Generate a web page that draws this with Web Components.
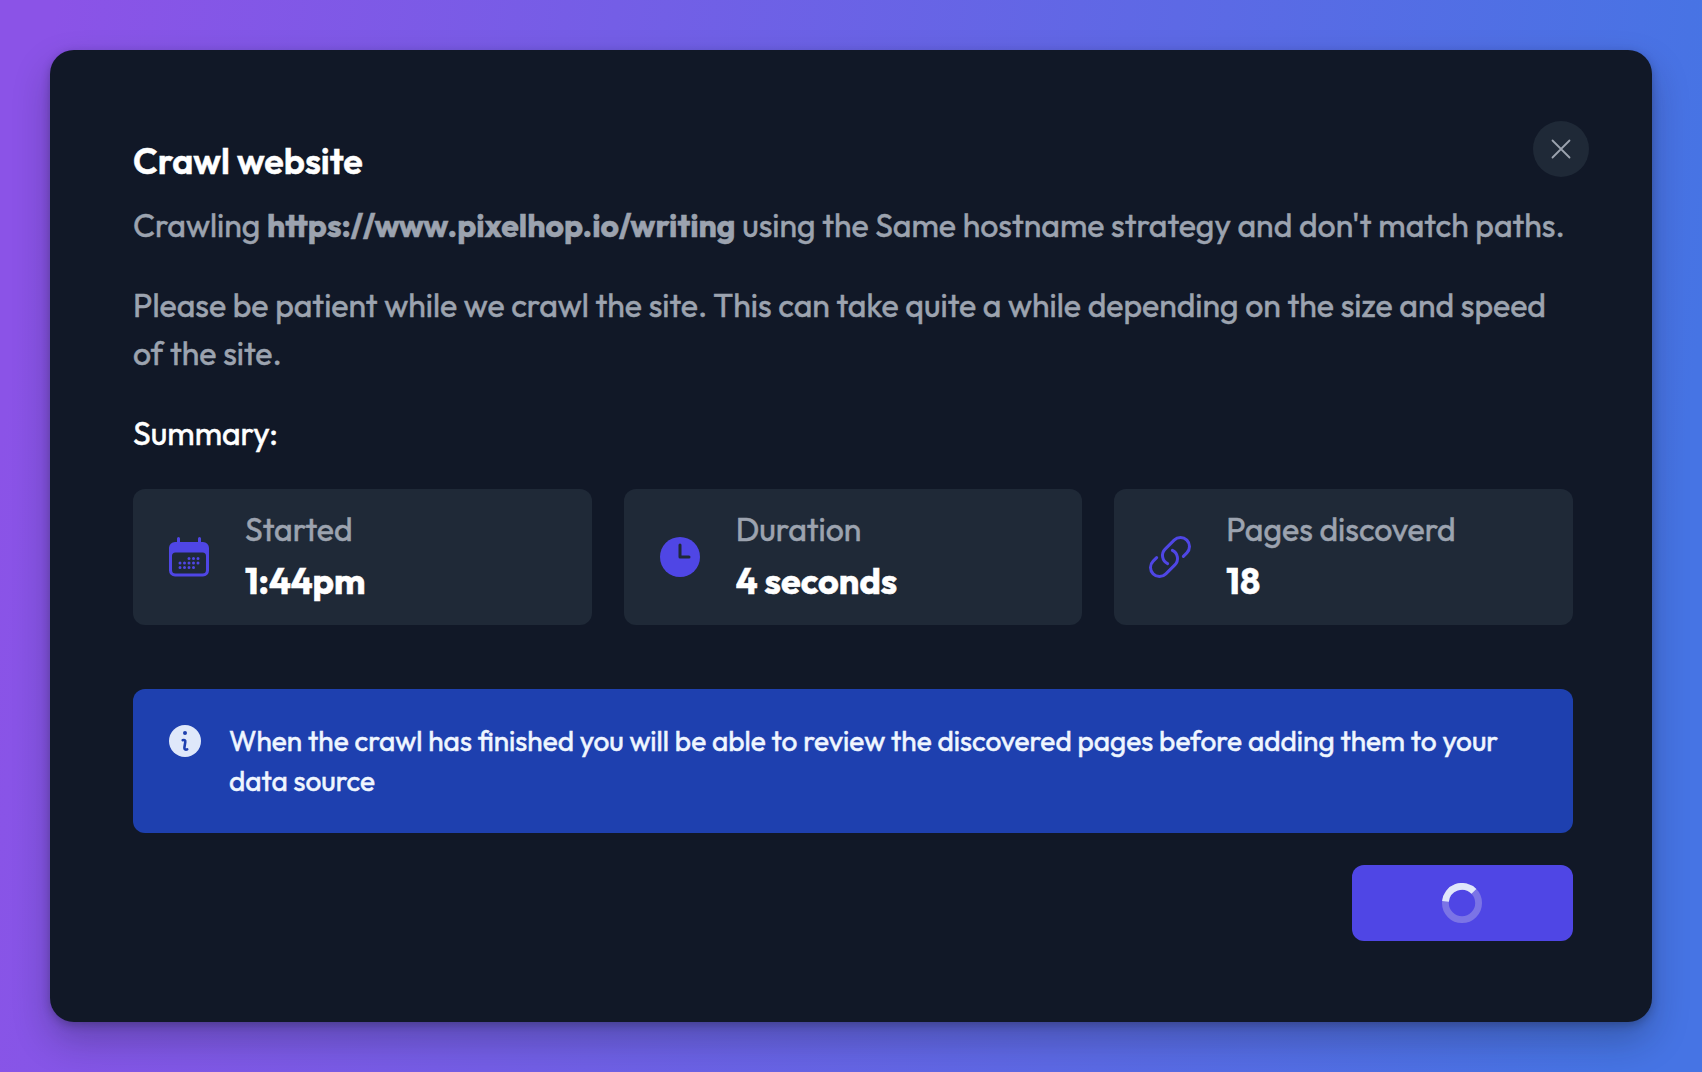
<!DOCTYPE html>
<html lang="en">
<head>
<meta charset="utf-8">
<title>Crawl website</title>
<style>
  html, body { height: 100%; }
  body {
    margin: 0;
    overflow: hidden;
    font-family: Outfit, Lato, "Open Sans", sans-serif;
    -webkit-text-stroke: .5px;
    background: linear-gradient(97deg, #8b53e7 0%, #8b53e7 3%, #4674e4 95%, #4674e4 100%);
  }
</style>
</head>
<body>
<crawl-dialog>
  <span slot="title">Crawl website</span>
  <crawl-copy>
    <p>Crawling <strong>https://www.pixelhop.io/writing</strong> using the Same hostname strategy and don't match paths.</p>
    <p>Please be patient while we crawl the site. This can take quite a while depending on the size and speed of the site.</p>
    <p class="summary">Summary:</p>
  </crawl-copy>
  <stat-list>
    <stat-card icon="calendar">
      <span slot="label">Started</span>
      <span slot="value">1:44pm</span>
    </stat-card>
    <stat-card icon="clock">
      <span slot="label">Duration</span>
      <span slot="value">4 seconds</span>
    </stat-card>
    <stat-card icon="link">
      <span slot="label">Pages discoverd</span>
      <span slot="value">18</span>
    </stat-card>
  </stat-list>
  <info-notice>When the crawl has finished you will be able to review the discovered pages before adding them to your data source</info-notice>
  <loading-button slot="actions"></loading-button>
</crawl-dialog>

<script>
const icons = {
  calendar: `
    <svg viewBox="0 0 48 48" fill="#4f46e5">
      <path fill-rule="evenodd" d="M12 5.500a1.500 1.500 0 0 1 3 0V9h18V5.500a1.500 1.500 0 0 1 3 0V9h2a6 6 0 0 1 6 6v22.500a6 6 0 0 1-6 6H10a6 6 0 0 1-6-6V15a6 6 0 0 1 6-6h2zM10.500 19.500A3.500 3.500 0 0 0 7 23v14a3.500 3.500 0 0 0 3.500 3.500h27A3.500 3.500 0 0 0 41 37V23a3.500 3.500 0 0 0-3.500-3.500z"/>
      <g stroke="#4f46e5" stroke-width="3" stroke-linecap="round">
        <path d="M24 25.500h0M28.500 25.500h0M33 25.500h0M15 30h0M19.500 30h0M24 30h0M28.500 30h0M33 30h0M15 34.500h0M19.500 34.500h0M24 34.500h0M28.500 34.500h0"/>
      </g>
    </svg>`,
  clock: `
    <svg viewBox="0 0 48 48">
      <circle cx="24" cy="24" r="20" fill="#4f46e5"/>
      <path d="M24 12v12h9" fill="none" stroke="#1f2937" stroke-width="3" stroke-linecap="round" stroke-linejoin="round"/>
    </svg>`,
  link: `
    <svg viewBox="0 0 24 24" fill="none" stroke="#4f46e5" stroke-width="1.500" stroke-linecap="round" stroke-linejoin="round">
      <path d="M13.190 8.688a4.500 4.500 0 0 1 1.242 7.244l-4.500 4.500a4.500 4.500 0 0 1-6.364-6.364l1.757-1.757m13.350-.622 1.757-1.757a4.500 4.500 0 0 0-6.364-6.364l-4.500 4.500a4.500 4.500 0 0 0 1.242 7.244"/>
    </svg>`
};

class CrawlDialog extends HTMLElement {
  constructor() {
    super();
    this.attachShadow({ mode: 'open' });
    this.shadowRoot.innerHTML = `
    <style>
      :host {
        display: flex;
        flex-direction: column;
        box-sizing: border-box;
        position: relative;
        width: 1602px;
        height: 972px;
        margin: 50px;
        padding: 83px 79px 81px 83px;
        border-radius: 24px;
        background: #111827;
        color: #fff;
        box-shadow: 0 18px 36px rgba(17, 24, 39, .28), 0 3px 8px rgba(17, 24, 39, .28);
      }
      h2 { margin: 0; font-size: 36px; line-height: 56px; font-weight: 600; }
      button {
        position: absolute;
        top: 71px;
        right: 63px;
        display: grid;
        place-items: center;
        width: 56px;
        height: 56px;
        padding: 0;
        border: 0;
        border-radius: 50%;
        background: #1f2937;
      }
      footer { display: flex; justify-content: flex-end; margin-top: 32px; }
    </style>
    <h2><slot name="title"></slot></h2>
    <button aria-label="Close">
      <svg width="20" height="20" viewBox="0 0 20 20" stroke="#9ca3af" stroke-width="1.800" stroke-linecap="round"><path d="M1.500 1.500l17 17M18.500 1.500l-17 17"/></svg>
    </button>
    <slot></slot>
    <footer><slot name="actions"></slot></footer>
    `;
  }
}

class CrawlCopy extends HTMLElement {
  constructor() {
    super();
    this.attachShadow({ mode: 'open' });
    this.shadowRoot.innerHTML = `
    <style>
      :host { display: block; margin-top: 12px; font-size: 32px; line-height: 48px; color: #9ca3af; }
      ::slotted(p) { margin: 0 0 32px; }
      ::slotted(.summary) { color: #fff; }
    </style>
    <slot></slot>`;
  }
}

class StatList extends HTMLElement {
  constructor() {
    super();
    this.attachShadow({ mode: 'open' });
    this.shadowRoot.innerHTML = `
    <style>
      :host { display: grid; grid-template-columns: repeat(3, 1fr); gap: 32px; }
    </style>
    <slot></slot>`;
  }
}

class StatCard extends HTMLElement {
  constructor() {
    super();
    this.attachShadow({ mode: 'open' });
    this.shadowRoot.innerHTML = `
    <style>
      :host {
        display: flex;
        align-items: center;
        gap: 32px;
        box-sizing: border-box;
        height: 136px;
        padding: 0 32px;
        border-radius: 12px;
        background: #1f2937;
      }
      svg { display: block; width: 48px; height: 48px; }
      .text { display: flex; flex-direction: column; }
      .label { font-size: 32px; line-height: 48px; color: #9ca3af; }
      .value { font-size: 36px; line-height: 56px; font-weight: 700; }
    </style>
    <div class="icon">${icons[this.getAttribute('icon')]}</div>
    <div class="text">
      <div class="label"><slot name="label"></slot></div>
      <div class="value"><slot name="value"></slot></div>
    </div>`;
  }
}

class InfoNotice extends HTMLElement {
  constructor() {
    super();
    this.attachShadow({ mode: 'open' });
    this.shadowRoot.innerHTML = `
    <style>
      :host {
        display: flex;
        gap: 28px;
        box-sizing: border-box;
        height: 144px;
        margin-top: 64px;
        padding: 32px 36px;
        border-radius: 12px;
        background: #1e40af;
        color: #eff6ff;
        font-size: 28px;
        line-height: 40px;
      }
      svg { flex: none; margin-top: 4px; }
    </style>
    <svg width="32" height="32" viewBox="0 0 32 32">
      <circle cx="16" cy="16" r="16" fill="#dfe8fa"/>
      <circle cx="16" cy="8" r="2" fill="#1e40af"/>
      <path d="M13.700 15.200c1.300-.6 2.900.1 2.600 1.700l-.9 5.600c-.3 1.800 1.200 2.600 2.800 1.800" fill="none" stroke="#1e40af" stroke-width="2.600" stroke-linecap="round"/>
    </svg>
    <div><slot></slot></div>`;
  }
}

class LoadingButton extends HTMLElement {
  constructor() {
    super();
    this.attachShadow({ mode: 'open' });
    this.shadowRoot.innerHTML = `
    <style>
      :host { display: flex; align-items: center; box-sizing: border-box; width: 221px; height: 76px; padding-left: 90px; border-radius: 12px; background: #4f46e5; }
      svg { display: block; }
    </style>
    <svg width="40" height="40" viewBox="0 0 40 40" fill="none" stroke-width="6.800">
      <circle cx="20" cy="20" r="16.600" stroke="#7b74e6"/>
      <path d="M3.480 18.400A16.600 16.600 0 0 1 31.900 8.400" stroke="#e0e7fb"/>
    </svg>`;
  }
}

customElements.define('crawl-dialog', CrawlDialog);
customElements.define('crawl-copy', CrawlCopy);
customElements.define('stat-list', StatList);
customElements.define('stat-card', StatCard);
customElements.define('info-notice', InfoNotice);
customElements.define('loading-button', LoadingButton);
</script>
</body>
</html>
